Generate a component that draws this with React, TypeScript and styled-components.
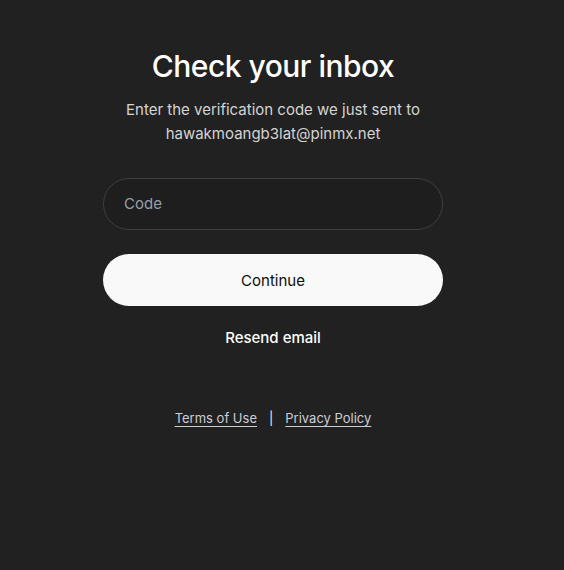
import {ReactElement} from "react";
import styled, {createGlobalStyle} from "styled-components";

const GlobalStyle = createGlobalStyle`
  html, body {
    margin: 0;
    padding: 0;
    background: #212121;
  }

  body {
    font-family: Inter, "Noto Sans", sans-serif;
    color: #ececec;
    -webkit-font-smoothing: antialiased;
  }
`

export default function App(): ReactElement {
  return (
    <>
      <GlobalStyle/>
      <Page>
        <Card>
          <Title>Check your inbox</Title>
          <Subtitle>
            Enter the verification code we just sent to
            <br/>
            hawakmoangb3lat@pinmx.net
          </Subtitle>
          <Form onSubmit={(e) => e.preventDefault()}>
            <CodeInput type="text" placeholder="Code" inputMode="numeric"/>
            <PrimaryButton type="submit">Continue</PrimaryButton>
          </Form>
          <TextButton type="button">Resend email</TextButton>
          <Footer>
            <FooterLink href="#">Terms of Use</FooterLink>
            <Divider>|</Divider>
            <FooterLink href="#">Privacy Policy</FooterLink>
          </Footer>
        </Card>
      </Page>
    </>
  )
}

const Page = styled.main`
  width: 546px;
  min-height: 570px;
  display: flex;
  justify-content: center;
  box-sizing: border-box;
  padding-top: 46px;
`

const Card = styled.div`
  width: 340px;
  display: flex;
  flex-direction: column;
  align-items: center;
`

const Title = styled.h1`
  margin: 0;
  font-size: 30px;
  font-weight: 500;
  line-height: 40px;
  letter-spacing: -0.5px;
  color: #ffffff;
`

const Subtitle = styled.p`
  margin: 12px 0 0;
  font-size: 15px;
  line-height: 24px;
  text-align: center;
  color: #d4d4d4;
`

const Form = styled.form`
  width: 100%;
  display: flex;
  flex-direction: column;
  gap: 24px;
  margin-top: 32px;
`

const CodeInput = styled.input`
  box-sizing: border-box;
  width: 100%;
  height: 52px;
  padding: 0 20px 2px;
  border-radius: 26px;
  border: 1px solid #3f3f3f;
  background: #1e1e1e;
  color: #ececec;
  font-family: inherit;
  font-size: 15px;
  outline: none;

  &::placeholder {
    color: #97a0ab;
  }
`

const PrimaryButton = styled.button`
  width: 100%;
  height: 52px;
  border: none;
  border-radius: 26px;
  background: #f9f9f9;
  color: #0d0d0d;
  font-family: inherit;
  font-size: 15px;
  font-weight: 400;
  cursor: pointer;
`

const TextButton = styled.button`
  margin-top: 20px;
  padding: 0;
  border: none;
  background: none;
  color: #ffffff;
  font-family: inherit;
  font-size: 15px;
  font-weight: 500;
  line-height: 24px;
  cursor: pointer;
`

const Footer = styled.div`
  margin-top: 58px;
  display: flex;
  align-items: center;
  gap: 12px;
  font-size: 13px;
  line-height: 20px;
  color: #cdcdd6;
`

const FooterLink = styled.a`
  color: inherit;
  text-decoration: underline;
  text-underline-offset: 3px;
`

const Divider = styled.span`
  color: #ececec;
`
